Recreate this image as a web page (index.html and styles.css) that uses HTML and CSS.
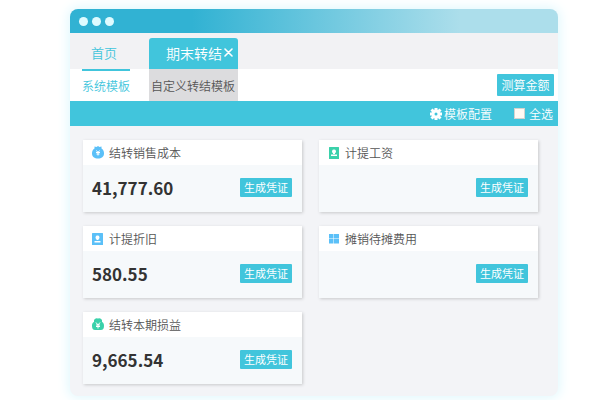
FILE: index.html
```html
<!DOCTYPE html>
<html lang="zh-CN">
<head>
  <meta charset="UTF-8" />
  <meta name="viewport" content="width=device-width, initial-scale=1.0"/>
  <title>期末转结</title>
  <link rel="stylesheet" href="styles.css">
</head>
<body>
  <div class="window">
    <div class="titlebar">
      <span class="dot"></span>
      <span class="dot"></span>
      <span class="dot"></span>
    </div>

    <nav class="tabs">
      <a href="#" class="tab">首页</a>
      <div class="tab active">
        <a href="#">期末转结</a>
        <button class="close" aria-label="关闭">
          <svg width="9" height="9" viewBox="0 0 9 9"><path d="M1 1l7 7M8 1L1 8" stroke="#fff" stroke-width="1.6" stroke-linecap="round"/></svg>
        </button>
      </div>
    </nav>

    <div class="subtabs">
      <a href="#" class="subtab current">系统模板</a>
      <a href="#" class="subtab custom">自定义转结模板</a>
      <button class="btn calc">测算金额</button>
    </div>

    <div class="toolbar">
      <button class="config">
        <svg width="12" height="12" viewBox="0 0 24 24"><path fill="none" stroke="#fff" stroke-width="6" d="M12 6a6 6 0 1 0 0 12 6 6 0 0 0 0-12z"/><path stroke="#fff" stroke-width="6" d="M12 0v5M12 19v5M0 12h5M19 12h5M3 3l4 4M17 17l4 4M3 21l4-4M17 7l4-4"/></svg>
        模板配置
      </button>
      <label class="check-all"><input type="checkbox">全选</label>
    </div>

    <main class="cards">
      <section class="card">
        <h3 class="card-head">
          <svg width="12" height="13" viewBox="0 0 24 26"><path fill="#5bc0f8" d="M5 1l4 1 3-2 3 2 4-1v4c4 2 5 6 5 10 0 7-5 10-12 10S0 22 0 15C0 11 1 7 5 5z"/><path fill="none" stroke="#fff" stroke-width="2" d="M9 9l3 4 3-4M12 13v6M8 13h8M9 16h6"/></svg>
          结转销售成本
        </h3>
        <div class="card-body">
          <span class="amount">41,777.60</span>
          <button class="btn">生成凭证</button>
        </div>
      </section>

      <section class="card">
        <h3 class="card-head">
          <svg width="12" height="12" viewBox="0 0 24 24"><rect x="2" width="20" height="24" rx="1" fill="#3ad1aa"/><path fill="#fff" d="M12 5a4 4 0 0 1 2 7.500v1.500h-4v-1.500A4 4 0 0 1 12 5zM6 15h12v3H6z"/></svg>
          计提工资
        </h3>
        <div class="card-body">
          <button class="btn">生成凭证</button>
        </div>
      </section>

      <section class="card">
        <h3 class="card-head">
          <svg width="12" height="12" viewBox="0 0 24 24"><rect width="22" height="24" rx="1" fill="#5bc0f8"/><path fill="#fff" d="M11 5a4 4 0 0 1 2 7.500v1.500h-4v-1.500A4 4 0 0 1 11 5zM5 16h12v3H5z"/></svg>
          计提折旧
        </h3>
        <div class="card-body">
          <span class="amount">580.55</span>
          <button class="btn">生成凭证</button>
        </div>
      </section>

      <section class="card">
        <h3 class="card-head">
          <svg width="12" height="12" viewBox="0 0 24 24"><path fill="#5bc0f8" d="M2 2h9v9H2zM12 2h10v9H12zM2 12h9v9H2zM12 12h10v9H12z"/></svg>
          摊销待摊费用
        </h3>
        <div class="card-body">
          <button class="btn">生成凭证</button>
        </div>
      </section>

      <section class="card">
        <h3 class="card-head">
          <svg width="12" height="13" viewBox="0 0 24 26"><path fill="#3ad1aa" d="M4 4q3-5 8-3 5-2 8 3v4c3 1 4 4 4 8 0 6-3 8-6 8H6c-3 0-6-2-6-8 0-4 1-7 4-8z"/><path fill="none" stroke="#fff" stroke-width="2" d="M8 9l4 5 4-5M12 14v7M8 14h8M8 17h8"/></svg>
          结转本期损益
        </h3>
        <div class="card-body">
          <span class="amount">9,665.54</span>
          <button class="btn">生成凭证</button>
        </div>
      </section>
    </main>
  </div>
</body>
</html>
```
FILE: styles.css
```css
:root {
  --main: #41c5dc;
  --text: #555;
  --line: #f2f2f4;
}
* {
  box-sizing: border-box;
}
body {
  margin: 0;
  padding: 9px 57px 5px 70px;
  background: #fff;
  color: var(--text);
  font-family: "Noto Sans CJK SC", sans-serif;
  font-size: 12px;
  font-weight: 350;
  line-height: 18px;
}
a {
  color: inherit;
  text-decoration: none;
}
button {
  padding: 0;
  border: none;
  background: none;
  color: #fff;
  font: inherit;
  cursor: pointer;
}
svg {
  display: block;
  flex: none;
}
.window {
  border-radius: 8px;
  background: #f3f4f7;
  box-shadow: 0 0 12px 2px #e0f8fd;
  overflow: hidden;
}
.titlebar {
  display: flex;
  align-items: center;
  gap: 4px;
  height: 24px;
  padding-left: 9px;
  background: linear-gradient(to right, #31b2d3 0%, #31b2d3 25%, #acdeeb 80%, #acdeeb 100%);
}
.dot {
  width: 9px;
  height: 9px;
  border-radius: 50%;
  background: #dffbff;
}
.tabs {
  display: flex;
  align-items: flex-end;
  height: 36px;
  background: var(--line);
}
.tab {
  display: flex;
  align-items: center;
  height: 31px;
  width: 79px;
  padding: 0 0 2px 21px;
  color: var(--main);
  font-size: 13px;
}
.tab.active {
  width: 89px;
  padding: 0 5px 2px 17px;
  justify-content: space-between;
  border-radius: 3px 3px 0 0;
  background: var(--main);
  color: #fff;
  font-size: 14px;
}
.subtabs {
  display: flex;
  align-items: center;
  height: 32px;
  padding-right: 4px;
  background: #fff;
}
.subtab {
  height: 32px;
  line-height: 34px;
}
.current {
  width: 48px;
  margin: 0 19px 0 12px;
  border-top: 2px solid var(--main);
  color: var(--main);
  line-height: 30px;
  white-space: nowrap;
}
.custom {
  width: 89px;
  padding-left: 2px;
  background: #dcdcde;
  white-space: nowrap;
}
.btn {
  width: 52px;
  height: 19px;
  margin-left: auto;
  border-radius: 1px;
  background: var(--main);
  font-size: 11px;
  font-weight: 400;
  line-height: 19px;
}
.calc {
  width: 57px;
  height: 22px;
  font-size: 12px;
  font-weight: 350;
  line-height: 22px;
}
.toolbar {
  display: flex;
  align-items: center;
  justify-content: flex-end;
  gap: 22px;
  height: 25px;
  padding-right: 5px;
  background: var(--main);
  color: #fff;
}
.config {
  display: flex;
  align-items: center;
  gap: 2px;
}
.check-all {
  display: flex;
  align-items: center;
  gap: 4px;
}
.check-all input {
  appearance: none;
  width: 11px;
  height: 11px;
  margin: 0;
  border: 1px solid #d5d3cf;
  background: #fffaf3;
}
.check-all input:checked {
  background: #2f9fb5;
}
.cards {
  display: grid;
  grid-template-columns: 1fr 1fr;
  gap: 14px 17px;
  padding: 14px 20px 12px 13px;
}
.card {
  background: #f6f9fb;
  box-shadow: 1px 1px 3px rgba(0, 0, 0, 0.18);
}
.card-head {
  display: flex;
  align-items: center;
  gap: 5px;
  height: 25px;
  margin: 0;
  padding-left: 9px;
  background: #fff;
  font-size: 12px;
  font-weight: 350;
}
.card-body {
  display: flex;
  align-items: center;
  height: 47px;
  padding: 0 10px 2px 9px;
}
.amount {
  color: #333;
  font-size: 17px;
  font-weight: 600;
}
```
